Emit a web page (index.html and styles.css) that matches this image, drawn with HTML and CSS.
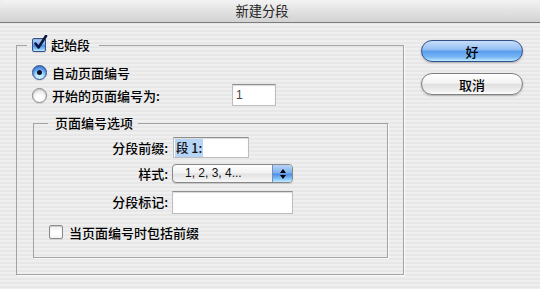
FILE: index.html
```html
<!DOCTYPE html>
<html lang="zh-CN">
<head>
  <meta charset="UTF-8">
  <title>新建分段</title>
  <link rel="stylesheet" href="styles.css">
</head>
<body>

  <div class="titlebar">新建分段</div>

  <div class="content">
    <fieldset class="group outer">
      <legend class="legend-check">
        <span class="check on">
          <svg width="16" height="17" viewBox="0 0 16 17"><path d="M3.5 8.5 L6.5 12.5 L14 1" fill="none" stroke="#0b1740" stroke-width="2.6" stroke-linecap="round" stroke-linejoin="round"/></svg>
        </span>起始段
      </legend>

      <div class="radio-row"><span class="radio on"></span>自动页面编号</div>
      <div class="radio-row row2">
        <span class="radio"></span><span class="radio-text">开始的页面编号为:</span>
        <span class="field num">1</span>
      </div>

      <fieldset class="group inner">
        <legend>页面编号选项</legend>
        <div class="form-grid">
          <label class="lbl">分段前缀:</label>
          <span class="field prefix"><span class="sel">段 1:</span></span>

          <label class="lbl">样式:</label>
          <span class="popup">
            <span class="popup-text">1, 2, 3, 4...</span>
            <span class="arrows">
              <svg width="8" height="12" viewBox="0 0 8 12"><path d="M4 1 L7 5 L1 5 Z M1 7 L7 7 L4 11 Z" fill="#000"/></svg>
            </span>
          </span>

          <label class="lbl">分段标记:</label>
          <span class="field marker"></span>
        </div>

        <div class="check-row"><span class="check"></span>当页面编号时包括前缀</div>
      </fieldset>
    </fieldset>

    <div class="buttons">
      <button class="btn default">好</button>
      <button class="btn">取消</button>
    </div>
  </div>

</body>
</html>
```

FILE: styles.css
```css
body {
  margin: 0;
  width: 540px;
  height: 289px;
  overflow: hidden;
  font-family: "Noto Sans CJK SC", sans-serif;
  font-size: 13px;
  font-weight: 500;
  color: #000;
  background: repeating-linear-gradient(#efefef 0 2px, #e7e7e7 2px 4px);
}

.titlebar {
  height: 22px;
  line-height: 22px;
  padding-right: 16px;
  text-align: center;
  font-size: 13.3px;
  font-weight: 400;
  color: #222;
  border-bottom: 1px solid #7c7c7c;
  border-radius: 5px 5px 0 0;
  background: linear-gradient(#f3f3f3, #e2e2e2 50%, #d2d2d2);
}

.content {
  display: flex;
  align-items: flex-start;
  padding: 14px 0 0 16px;
}

.group {
  margin: 0;
  border: 1px solid #a3a3a3;
  box-shadow: 1px 1px 0 rgba(255, 255, 255, 0.8);
}
.group legend {
  line-height: 16px;
}

.outer {
  width: 356px;
  padding: 9px 15px 16px 15px;
}
.legend-check {
  display: flex;
  align-items: center;
  gap: 5px;
  margin-left: -5px;
  padding: 0 9px 0 5px;
}

.radio-row {
  display: flex;
  align-items: center;
  gap: 5px;
  height: 20px;
}
.row2 {
  height: 22px;
  margin-top: 2px;
}
.radio-text {
  width: 175px;
}

.radio {
  width: 13px;
  height: 13px;
  border-radius: 50%;
  border: 1px solid #8a8a8a;
  background: radial-gradient(circle at 50% 75%, #ffffff 0 30%, #e6e6e6 70%), #eee;
  box-shadow: inset 0 1px 1px rgba(0, 0, 0, 0.15), 0 1px 1px rgba(0, 0, 0, 0.1);
  position: relative;
}
.radio.on {
  border-color: #34508a;
  background: radial-gradient(circle at 50% 80%, #c4ecff 0 25%, #5d9eec 60%, #3a72c8 100%);
}
.radio.on::after {
  content: "";
  position: absolute;
  left: 4px;
  top: 4px;
  width: 5px;
  height: 5px;
  border-radius: 50%;
  background: #0c1430;
}

.check {
  width: 12px;
  height: 12px;
  border: 1px solid #8a8a8a;
  border-radius: 2px;
  background: linear-gradient(#f0f0f0, #ffffff 60%, #f4f4f4);
  box-shadow: inset 0 1px 1px rgba(0, 0, 0, 0.15), 0 1px 1px rgba(0, 0, 0, 0.1);
  position: relative;
  flex: none;
}
.check.on {
  border-color: #34508a;
  background: linear-gradient(#b4d0f4, #7fb0ee 45%, #4d8ce4 55%, #8cc8fa 85%, #c0ecff);
}
.check svg {
  position: absolute;
  left: -1px;
  top: -4px;
}

.field {
  display: inline-flex;
  align-items: center;
  box-sizing: border-box;
  height: 22px;
  padding-left: 3px;
  background: #fff;
  border: 1px solid #bdbdbd;
  border-top-color: #8e8e8e;
  box-shadow: inset 0 1px 1px rgba(0, 0, 0, 0.15);
  font-family: "Liberation Sans", "Noto Sans CJK SC", sans-serif;
  font-size: 12px;
  font-weight: 400;
  color: #444;
}
.num {
  width: 44px;
}

.inner {
  margin: 9px 0 0 1px;
  padding: 6px 15px 17px 15px;
}
.inner legend {
  margin-left: -1px;
  padding: 0 5px 0 7px;
}

.form-grid {
  display: grid;
  grid-template-columns: 119px auto;
  column-gap: 4px;
  row-gap: 6px;
  align-items: center;
  justify-items: start;
}
.lbl {
  justify-self: end;
}
.prefix {
  width: 76px;
  height: 21px;
  margin-left: 1px;
  padding-left: 1px;
}
.sel {
  background: #b6d4f6;
  color: #111;
  padding: 0 1px;
  line-height: 18px;
  font-family: "Noto Sans CJK SC", sans-serif;
  font-size: 12.5px;
  font-weight: 500;
}
.marker {
  width: 121px;
  height: 23px;
  margin-top: 2px;
}

.popup {
  display: flex;
  box-sizing: border-box;
  width: 121px;
  height: 19px;
  border: 1px solid #888;
  border-radius: 4px;
  overflow: hidden;
  background: linear-gradient(#ffffff, #f1f1f1 48%, #e2e2e2 52%, #f6f6f6);
  box-shadow: 0 1px 1px rgba(0, 0, 0, 0.15);
}
.popup-text {
  padding-left: 12px;
  line-height: 17px;
  font-family: "Liberation Sans", sans-serif;
  font-size: 12px;
  font-weight: 400;
  color: #111;
}
.arrows {
  margin-left: auto;
  width: 19px;
  display: flex;
  align-items: center;
  justify-content: center;
  border-left: 1px solid #6e8fc4;
  background: linear-gradient(#b8d4f6, #80b2ee 45%, #4f8ee4 55%, #8ccbfa 85%, #c4eeff);
}

.check-row {
  display: flex;
  align-items: center;
  gap: 6px;
  height: 16px;
  margin-top: 10px;
}

.buttons {
  display: flex;
  flex-direction: column;
  gap: 11px;
  margin: 3px 0 0 17px;
}
.btn {
  width: 102px;
  height: 22px;
  padding: 0;
  border: 1px solid #7f7f7f;
  border-radius: 11px;
  font-family: "Noto Sans CJK SC", sans-serif;
  font-size: 13px;
  font-weight: 500;
  color: #000;
  background: linear-gradient(#ffffff, #f3f3f3 45%, #e0e0e0 52%, #efefef 85%, #ffffff);
  box-shadow: 0 1px 2px rgba(0, 0, 0, 0.25);
}
.btn.default {
  border-color: #33508c;
  background: linear-gradient(#c8def8, #94c0f4 42%, #5c9eee 52%, #78b6f6 80%, #bcecff);
}
```
